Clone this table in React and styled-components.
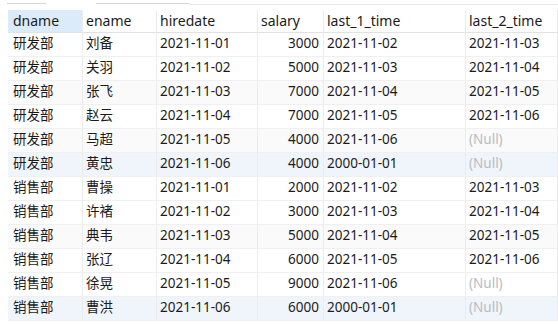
import React from 'react'
import styled, { createGlobalStyle } from 'styled-components'

const GlobalStyle = createGlobalStyle`
  html, body {
    margin: 0;
    padding: 0;
    background: #ffffff;
  }
  body {
    font-family: "Noto Sans", "Noto Sans CJK SC", sans-serif;
    color: #1b1b1b;
  }
`

const COLUMNS = '75px 74px 101px 66px 142px 1fr'

const Page = styled.div`
  width: 558px;
  height: 325px;
  overflow: hidden;
  padding-left: 8px;
  box-sizing: border-box;
`
const TopStrip = styled.div`
  height: 10px;
  display: flex;
  align-items: flex-start;
  padding-top: 3px;
  box-sizing: border-box;
  margin-left: -1px;
`
const StripBar = styled.div`
  height: 1px;
  width: ${props => props.width}px;
  margin-left: ${props => props.gap}px;
  background: ${props => props.light ? '#e8e8e8' : '#d6d6d6'};
  margin-top: ${props => props.light ? 1 : 0}px;
  flex: ${props => props.grow ? 1 : 'none'};
`
const Grid = styled.div`
  display: grid;
  grid-template-columns: ${COLUMNS};
  font-size: 13.5px;
  line-height: 1;
`
const HeadCell = styled.div`
  height: 23px;
  box-sizing: border-box;
  display: flex;
  align-items: center;
  padding: 0 4px 0 ${props => props.first ? 5 : 3}px;
  background: ${props => props.active ? '#dcebf9' : '#ffffff'};
  border-right: 1px solid #ebebeb;
  border-bottom: 1px solid #e2e2e2;
  font-size: 14px;
  color: #1b1b1b;
`
const Cell = styled.div`
  height: 24px;
  box-sizing: border-box;
  display: flex;
  align-items: center;
  justify-content: ${props => props.right ? 'flex-end' : 'flex-start'};
  padding: 0 4px 1px ${props => props.first ? 5 : 3}px;
  background: ${props => props.bg};
  border-right: 1px solid #ececec;
  border-bottom: 1px solid #f0f0f0;
  color: ${props => props.muted ? '#b8bcc4' : '#1b1b1b'};
  white-space: nowrap;
`

const headers = ['dname', 'ename', 'hiredate', 'salary', 'last_1_time', 'last_2_time']

const rows = [
  ['研发部', '刘备', '2021-11-01', '3000', '2021-11-02', '2021-11-03'],
  ['研发部', '关羽', '2021-11-02', '5000', '2021-11-03', '2021-11-04'],
  ['研发部', '张飞', '2021-11-03', '7000', '2021-11-04', '2021-11-05'],
  ['研发部', '赵云', '2021-11-04', '7000', '2021-11-05', '2021-11-06'],
  ['研发部', '马超', '2021-11-05', '4000', '2021-11-06', null],
  ['研发部', '黄忠', '2021-11-06', '4000', '2000-01-01', null],
  ['销售部', '曹操', '2021-11-01', '2000', '2021-11-02', '2021-11-03'],
  ['销售部', '许褚', '2021-11-02', '3000', '2021-11-03', '2021-11-04'],
  ['销售部', '典韦', '2021-11-03', '5000', '2021-11-04', '2021-11-05'],
  ['销售部', '张辽', '2021-11-04', '6000', '2021-11-05', '2021-11-06'],
  ['销售部', '徐晃', '2021-11-05', '9000', '2021-11-06', null],
  ['销售部', '曹洪', '2021-11-06', '6000', '2000-01-01', null],
]

function rowBackground(i) {
  if (i === 5 || i === 11) return '#f0f5fb'
  if (i === 2 || i === 4 || i === 8) return '#fafafa'
  return '#ffffff'
}

export default function App() {
  return (
    <Page>
      <GlobalStyle />
      <TopStrip>
        <StripBar width={39} gap={0} />
        <StripBar width={93} gap={50} />
        <StripBar light grow gap={0} />
      </TopStrip>
      <Grid>
        {headers.map((h, i) => (
          <HeadCell key={h} active={i === 0} first={i === 0}>{h}</HeadCell>
        ))}
        {rows.map((row, r) => row.map((value, c) => (
          <Cell
            key={r + '-' + c}
            bg={rowBackground(r)}
            first={c === 0}
            right={c === 3}
            muted={value === null}
          >
            {value === null ? '(Null)' : value}
          </Cell>
        )))}
      </Grid>
    </Page>
  )
}
